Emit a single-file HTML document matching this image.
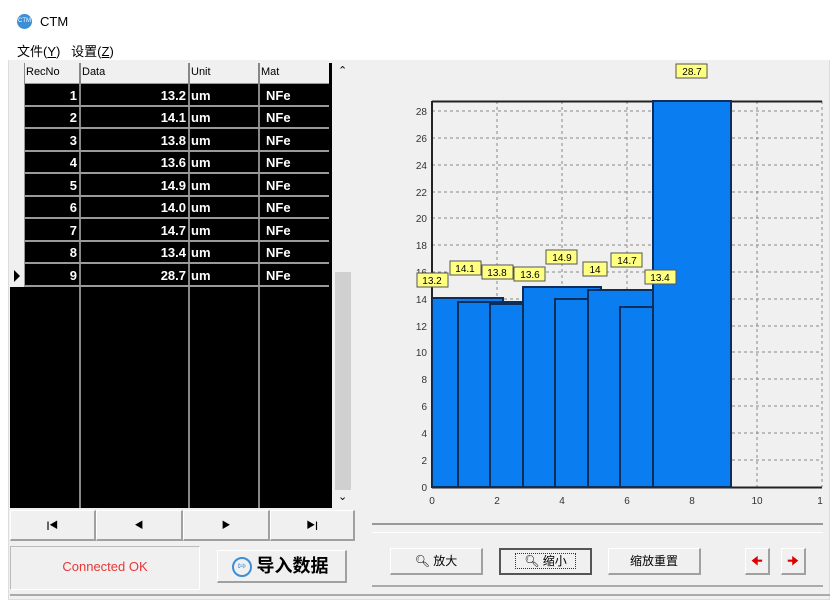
<!DOCTYPE html>
<html><head><meta charset="utf-8"><style>
*{margin:0;padding:0;box-sizing:border-box}
body{width:833px;height:607px;background:#fff;position:relative;overflow:hidden;font-family:"Liberation Sans","Noto Sans CJK SC",sans-serif;font-size:12px}
.a{position:absolute}
.row{position:absolute;left:25px;width:304px;height:22px;border-bottom:2px solid #9a9a9a;color:#fff;font-weight:bold;font-size:13px}
.row span{position:absolute;top:3px}
.btn{position:absolute;background:#f0f0f0;border:1px solid #fff;border-right:2px solid #a0a0a0;border-bottom:2px solid #a0a0a0;text-align:center;font-size:12px}
</style></head><body>
<div class="a" style="left:8px;top:8px;width:822px;height:592px;background:#f0f0f0;border:1px solid #ddd"></div>
<div class="a" style="left:8px;top:8px;width:822px;height:52px;background:#fff"></div>
<div class="a" style="left:17px;top:14px;width:15px;height:15px;border-radius:50%;background:#3a8fd6;color:#fff;font-size:6px;line-height:15px;text-align:center">CTM</div>
<div class="a" style="left:40px;top:14px;font-size:13px">CTM</div>
<div class="a" style="left:17px;top:41px;font-size:13px">文件(<u>Y</u>) &nbsp; 设置(<u>Z</u>)</div>
<!-- grid -->
<div class="a" style="left:10px;top:63px;width:322px;height:445px;background:#000"></div>
<div class="a" style="left:10px;top:63px;width:319px;height:21px;background:#f0f0f0;border-bottom:1px solid #999"></div>
<div class="a" style="left:10px;top:63px;width:15px;height:224px;background:#f0f0f0;border-right:1px solid #999"></div>
<div class="a" style="left:26px;top:66px;font-size:11px">RecNo</div>
<div class="a" style="left:82px;top:66px;font-size:11px">Data</div>
<div class="a" style="left:191px;top:66px;font-size:11px">Unit</div>
<div class="a" style="left:261px;top:66px;font-size:11px">Mat</div>
<div class="a" style="left:79px;top:63px;width:2px;height:445px;background:#888"></div>
<div class="a" style="left:188px;top:63px;width:2px;height:445px;background:#888"></div>
<div class="a" style="left:258px;top:63px;width:2px;height:445px;background:#888"></div>
<div class="a" style="left:24px;top:63px;width:1px;height:22px;background:#888"></div>
<div class="row" style="top:85px"><span style="right:252px">1</span><span style="right:143px">13.2</span><span style="left:166px">um</span><span style="left:241px">NFe</span></div>
<div class="row" style="top:107px"><span style="right:252px">2</span><span style="right:143px">14.1</span><span style="left:166px">um</span><span style="left:241px">NFe</span></div>
<div class="row" style="top:130px"><span style="right:252px">3</span><span style="right:143px">13.8</span><span style="left:166px">um</span><span style="left:241px">NFe</span></div>
<div class="row" style="top:152px"><span style="right:252px">4</span><span style="right:143px">13.6</span><span style="left:166px">um</span><span style="left:241px">NFe</span></div>
<div class="row" style="top:175px"><span style="right:252px">5</span><span style="right:143px">14.9</span><span style="left:166px">um</span><span style="left:241px">NFe</span></div>
<div class="row" style="top:197px"><span style="right:252px">6</span><span style="right:143px">14.0</span><span style="left:166px">um</span><span style="left:241px">NFe</span></div>
<div class="row" style="top:220px"><span style="right:252px">7</span><span style="right:143px">14.7</span><span style="left:166px">um</span><span style="left:241px">NFe</span></div>
<div class="row" style="top:242px"><span style="right:252px">8</span><span style="right:143px">13.4</span><span style="left:166px">um</span><span style="left:241px">NFe</span></div>
<div class="row" style="top:265px"><span style="right:252px">9</span><span style="right:143px">28.7</span><span style="left:166px">um</span><span style="left:241px">NFe</span></div>
<div class="a" style="left:14px;top:270px;width:0;height:0;border-left:6px solid #000;border-top:6px solid transparent;border-bottom:6px solid transparent"></div>
<div class="a" style="left:332px;top:63px;width:21px;height:445px;background:#f0f0f0"></div>
<div class="a" style="left:335px;top:272px;width:16px;height:218px;background:#d0d0d0"></div>
<div class="a" style="left:338px;top:64px;font-size:11px">&#8963;</div>
<div class="a" style="left:338px;top:490px;font-size:11px">&#8964;</div>
<!-- nav -->
<div class="btn" style="left:10px;top:510px;width:86px;height:31px;line-height:29px;font-size:9px;font-weight:bold">|&#9664;</div>
<div class="btn" style="left:96px;top:510px;width:87px;height:31px;line-height:29px;font-size:9px">&#9664;</div>
<div class="btn" style="left:183px;top:510px;width:87px;height:31px;line-height:29px;font-size:9px">&#9654;</div>
<div class="btn" style="left:270px;top:510px;width:85px;height:31px;line-height:29px;font-size:9px;font-weight:bold">&#9654;|</div>
<div class="a" style="left:10px;top:546px;width:190px;height:44px;border:1px solid #bbb;border-right-color:#fff;border-bottom-color:#fff;color:#e83838;font-size:13px;line-height:40px;text-align:center">Connected OK</div>
<div class="btn" style="left:217px;top:550px;width:130px;height:33px;font-size:18px;line-height:30px;padding-left:22px;font-weight:bold">导入数据
<div class="a" style="left:14px;top:6px;width:20px;height:20px;border:2px solid #3a8fd6;border-radius:50%;font-size:10px;line-height:16px;color:#3a8fd6;font-weight:normal">&#8688;</div></div>
<div class="a" style="left:10px;top:594px;width:820px;height:2px;background:#aaa"></div>
<!-- chart -->
<div class="a" style="left:372px;top:62px;width:451px;height:463px;border-bottom:2px solid #999;background:#f0f0f0"></div>
<svg class="a" style="left:0;top:0" width="833" height="607" font-family="Liberation Sans" font-size="10">
<defs><clipPath id="c"><rect x="432" y="60" width="390" height="428"/></clipPath></defs>
<g stroke="#888" stroke-dasharray="3,3" stroke-width="1">
<line x1="432" x2="822" y1="460" y2="460"/><line x1="432" x2="822" y1="433" y2="433"/><line x1="432" x2="822" y1="406" y2="406"/><line x1="432" x2="822" y1="379" y2="379"/><line x1="432" x2="822" y1="352" y2="352"/><line x1="432" x2="822" y1="326" y2="326"/><line x1="432" x2="822" y1="299" y2="299"/><line x1="432" x2="822" y1="272" y2="272"/><line x1="432" x2="822" y1="245" y2="245"/><line x1="432" x2="822" y1="218" y2="218"/><line x1="432" x2="822" y1="192" y2="192"/><line x1="432" x2="822" y1="165" y2="165"/><line x1="432" x2="822" y1="138" y2="138"/><line x1="432" x2="822" y1="111" y2="111"/>
<line x1="497" x2="497" y1="101" y2="487"/><line x1="562" x2="562" y1="101" y2="487"/><line x1="627" x2="627" y1="101" y2="487"/><line x1="692" x2="692" y1="101" y2="487"/><line x1="757" x2="757" y1="101" y2="487"/><line x1="822" x2="822" y1="101" y2="487"/>
</g>
<line x1="432" x2="822" y1="101.5" y2="101.5" stroke="#222" stroke-width="2"/>
<line x1="432" x2="432" y1="101" y2="488" stroke="#222" stroke-width="2"/>
<line x1="432" x2="822" y1="487.5" y2="487.5" stroke="#222" stroke-width="2"/>
<g clip-path="url(#c)" fill="#0a7ef0" stroke="#0b2f5a" stroke-width="2">
<rect x="432" y="310" width="39" height="177"/>
<rect x="432" y="298" width="71" height="189"/>
<rect x="458" y="302" width="78" height="185"/>
<rect x="490" y="304" width="78" height="183"/>
<rect x="523" y="287" width="78" height="200"/>
<rect x="555" y="299" width="78" height="188"/>
<rect x="588" y="290" width="78" height="197"/>
<rect x="620" y="307" width="78" height="180"/>
<rect x="653" y="101" width="78" height="386"/>
</g>
<g fill="#333" text-anchor="end">
<text x="427" y="491">0</text><text x="427" y="464">2</text><text x="427" y="437">4</text><text x="427" y="410">6</text><text x="427" y="383">8</text><text x="427" y="356">10</text><text x="427" y="330">12</text><text x="427" y="303">14</text><text x="427" y="276">16</text><text x="427" y="249">18</text><text x="427" y="222">20</text><text x="427" y="196">22</text><text x="427" y="169">24</text><text x="427" y="142">26</text><text x="427" y="115">28</text>
</g>
<g fill="#333" text-anchor="middle">
<text x="432" y="504">0</text><text x="497" y="504">2</text><text x="562" y="504">4</text><text x="627" y="504">6</text><text x="692" y="504">8</text><text x="757" y="504">10</text><text x="820" y="504">1</text>
</g>
<g font-size="10" text-anchor="middle">
<g fill="#ffff80" stroke="#555">
<rect x="417" y="273" width="31" height="14"/><rect x="450" y="261" width="31" height="14"/><rect x="482" y="265" width="31" height="14"/><rect x="514" y="267" width="31" height="14"/><rect x="546" y="250" width="31" height="14"/><rect x="583" y="262" width="24" height="14"/><rect x="611" y="253" width="31" height="14"/><rect x="645" y="270" width="31" height="14"/><rect x="676" y="64" width="31" height="14"/>
</g>
<text x="432" y="284">13.2</text><text x="465" y="272">14.1</text><text x="497" y="276">13.8</text><text x="530" y="278">13.6</text><text x="562" y="261">14.9</text><text x="595" y="273">14</text><text x="627" y="264">14.7</text><text x="660" y="281">13.4</text><text x="692" y="75">28.7</text>
</g>
</svg>
<div class="a" style="left:372px;top:532px;width:451px;height:55px;border-top:1px solid #fff;border-bottom:2px solid #aaa"></div>
<div class="btn" style="left:390px;top:548px;width:93px;height:27px;line-height:24px">&#128269;&#xFE0E; 放大</div>
<div class="btn" style="left:499px;top:548px;width:93px;height:27px;line-height:22px;border:2px solid #555"><span style="border:1px dotted #333;padding:0 8px">&#128269;&#xFE0E; 缩小</span></div>
<div class="btn" style="left:608px;top:548px;width:93px;height:27px;line-height:24px">缩放重置</div>
<div class="btn" style="left:745px;top:548px;width:25px;height:27px;line-height:24px;color:#d00;font-weight:bold">&#129032;</div>
<div class="btn" style="left:781px;top:548px;width:25px;height:27px;line-height:24px;color:#d00;font-weight:bold">&#129034;</div>
</body></html>
